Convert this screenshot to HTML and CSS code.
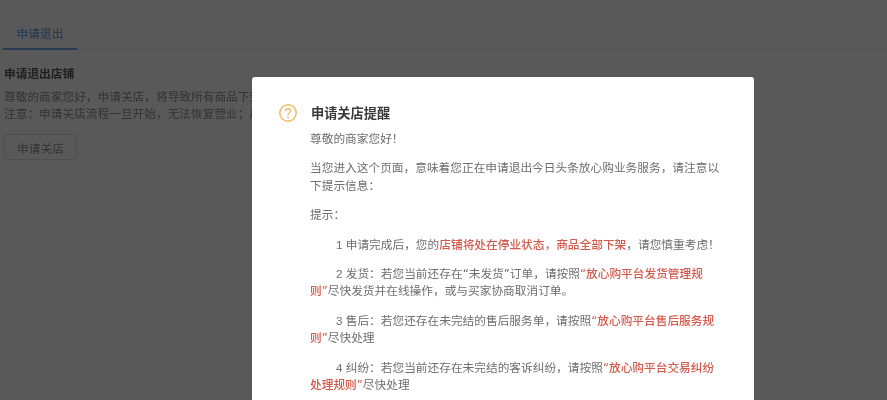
FILE: index.html
```html
<!DOCTYPE html>
<html lang="zh-CN">
<head>
    <meta charset="UTF-8">
    <title>申请退出</title>
    <link rel="stylesheet" href="styles.css">
</head>
<body>

<div class="page">
    <div class="tabs">
        <div class="tab">申请退出</div>
    </div>
    <div class="section">
        <h2>申请退出店铺</h2>
        <p>尊敬的商家您好，申请关店，将导致所有商品下架，店铺将处在停业状态，请您慎重考虑！</p>
        <p>注意：申请关店流程一旦开始，无法恢复营业；后续如需开店请重新提交入驻申请。</p>
        <button class="close-btn">申请关店</button>
    </div>
</div>

<div class="overlay">
    <div class="modal">
        <svg class="modal-icon" viewBox="0 0 18 18" width="18" height="18">
            <circle cx="9" cy="9" r="8.2" fill="none" stroke="#efbb68" stroke-width="1.5"/>
            <path d="M6.5 7.2c0-1.5 1-2.5 2.5-2.5s2.5 1 2.5 2.3c0 1-.6 1.5-1.3 2-.8.5-1.2 1-1.2 1.8v.5" fill="none" stroke="#efbb68" stroke-width="1.4"/>
            <circle cx="9" cy="13.5" r=".9" fill="#efbb68"/>
        </svg>
        <div class="modal-body">
            <h3>申请关店提醒</h3>
            <p>尊敬的商家您好！</p>
            <p>当您进入这个页面，意味着您正在申请退出今日头条放心购业务服务，请注意以下提示信息：</p>
            <p>提示：</p>
            <p class="item">1 申请完成后，您的<span class="warn">店铺将处在停业状态，商品全部下架</span>，请您慎重考虑！</p>
            <p class="item">2 发货：若您当前还存在<span class="q">“</span>未发货<span class="q">”</span>订单，请按照<span class="warn"><span class="q">“</span>放心购平台发货管理规则<span class="q">”</span></span>尽快发货并在线操作，或与买家协商取消订单。</p>
            <p class="item">3 售后：若您还存在未完结的售后服务单，请按照<span class="warn"><span class="q">“</span>放心购平台售后服务规则<span class="q">”</span></span>尽快处理</p>
            <p class="item">4 纠纷：若您当前还存在未完结的客诉纠纷，请按照<span class="warn"><span class="q">“</span>放心购平台交易纠纷处理规则<span class="q">”</span></span>尽快处理</p>
        </div>
    </div>
</div>

</body>
</html>
```

FILE: styles.css
```css
html, body {
    margin: 0;
    height: 100%;
    overflow: hidden;
}

body {
    font-family: "Liberation Sans", "Noto Sans CJK SC", sans-serif;
    font-size: 11.7px;
    background-color: #fff;
    color: #909090;
}

.page {
    filter: blur(0.5px);
}

.tabs {
    display: flex;
    height: 50px;
    padding-left: 3px;
    border-bottom: 1px solid #e8e8e8;
    box-sizing: border-box;
}

.tab {
    width: 74px;
    height: 50px;
    padding-top: 25px;
    box-sizing: border-box;
    text-align: center;
    line-height: 17px;
    color: #5f9be8;
    border-bottom: 2px solid #6fa6f0;
}

.section {
    padding: 15px 4px;
}

.section h2 {
    margin: 0 0 6px;
    font-size: 11.7px;
    line-height: 17px;
    font-weight: bold;
    color: #5a5a5a;
}

.section p {
    margin: 0;
    line-height: 17px;
    white-space: nowrap;
}

.close-btn {
    display: block;
    margin-top: 12px;
    width: 73px;
    height: 26px;
    padding: 0;
    font: inherit;
    color: #909090;
    background: #fff;
    border: 1px solid #e0e0e0;
    border-radius: 2px;
}

.overlay {
    position: fixed;
    inset: 0;
    padding: 77px 0 0 252px;
    background-color: rgba(0, 0, 0, 0.65);
}

.modal {
    display: flex;
    width: 502px;
    height: 500px;
    padding: 27px 34px 0 27px;
    box-sizing: border-box;
    background: #fff;
    border-radius: 3px;
}

.modal-icon {
    flex: none;
    margin-right: 13px;
}

.modal-body {
    flex: 1;
}

.modal-body h3 {
    margin: 1px 0 7px;
    padding-left: 1px;
    font-size: 13.2px;
    line-height: 18px;
    font-weight: bold;
    color: #3a3a3a;
}

.modal-body p {
    margin: 0 0 12px;
    line-height: 17.4px;
    color: #6e6e6e;
}

.modal-body .item {
    text-indent: 26px;
}

.warn {
    color: #d25a4c;
    font-weight: 500;
}

.q {
    font-family: "DejaVu Sans", sans-serif;
    line-height: 0;
}
```
